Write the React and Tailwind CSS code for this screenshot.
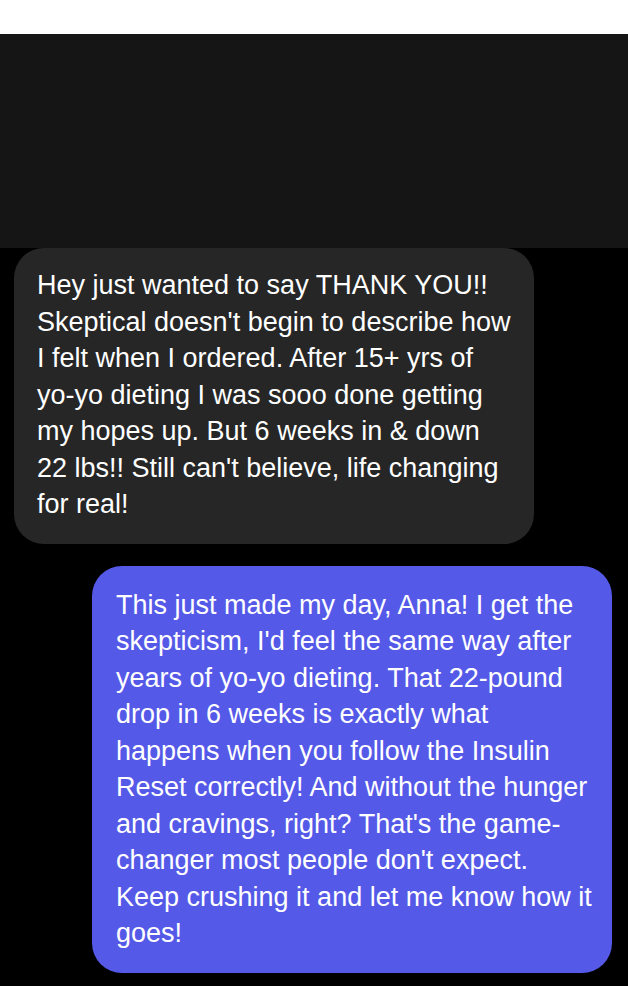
import React from 'react';

const received = [
    'Hey just wanted to say THANK YOU!!',
    "Skeptical doesn't begin to describe how",
    'I felt when I ordered. After 15+ yrs of',
    'yo-yo dieting I was sooo done getting',
    'my hopes up. But 6 weeks in & down',
    "22 lbs!! Still can't believe, life changing",
    'for real!',
];

const sent = [
    'This just made my day, Anna! I get the',
    "skepticism, I'd feel the same way after",
    'years of yo-yo dieting. That 22-pound',
    'drop in 6 weeks is exactly what',
    'happens when you follow the Insulin',
    'Reset correctly! And without the hunger',
    "and cravings, right? That's the game-",
    "changer most people don't expect.",
    'Keep crushing it and let me know how it',
    'goes!',
];

const App = () => {
    return (
        <div className="w-[628px] h-[986px] bg-black flex flex-col overflow-hidden" style={{ fontFamily: '"Liberation Sans", Arial, sans-serif' }}>
            {/* franja blanca superior */}
            <div className="h-[34px] bg-white shrink-0"></div>

            {/* cabecera oscura */}
            <div className="h-[214px] bg-[#151515] shrink-0"></div>

            {/* mensaje recibido */}
            <div className="ml-[14px] w-[520px] bg-[#262626] rounded-[30px] pl-[23px] pr-[10px] pt-[19px] pb-[21px] shrink-0">
                {received.map((line, i) => (
                    <p key={i} className="text-white text-[27px] leading-[36.5px] whitespace-nowrap">{line}</p>
                ))}
            </div>

            {/* respuesta enviada */}
            <div className="mt-[22px] ml-[92px] w-[520px] bg-[#5559e8] rounded-[30px] pl-[24px] pr-[10px] pt-[21px] pb-[21px] shrink-0">
                {sent.map((line, i) => (
                    <p key={i} className="text-white text-[27px] leading-[36.5px] whitespace-nowrap">{line}</p>
                ))}
            </div>
        </div>
    );
};

export default App;
